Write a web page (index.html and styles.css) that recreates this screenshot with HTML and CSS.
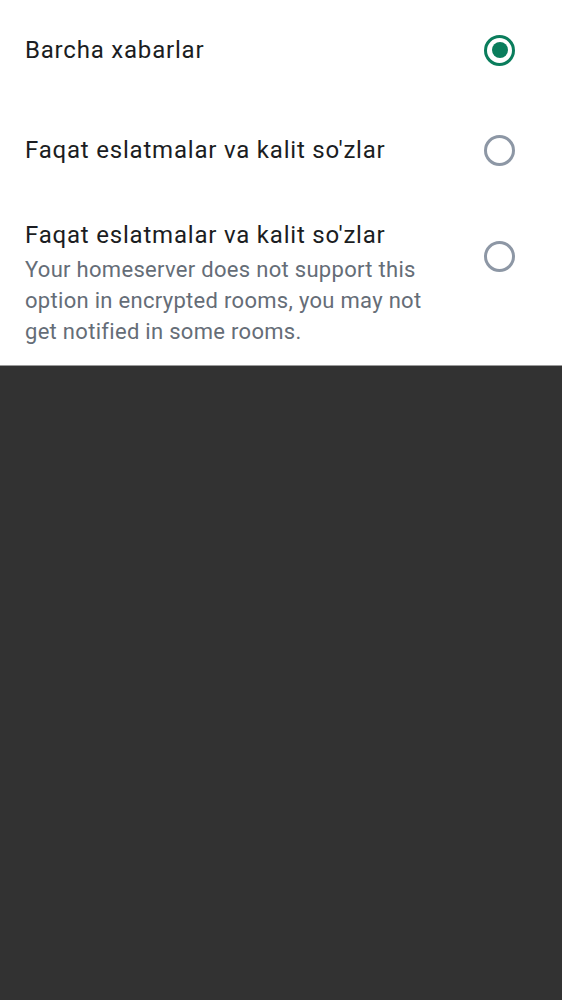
FILE: index.html
```html
<!DOCTYPE html>
<html>
<head>
<meta charset="utf-8">
<link rel="stylesheet" href="styles.css">
</head>
<body>
<div class="sheet">
  <div class="row single">
    <div class="text"><div class="title">Barcha xabarlar</div></div>
    <span class="radio checked"></span>
  </div>
  <div class="row single">
    <div class="text"><div class="title">Faqat eslatmalar va kalit so'zlar</div></div>
    <span class="radio"></span>
  </div>
  <div class="row multi">
    <div class="text">
      <div class="title">Faqat eslatmalar va kalit so'zlar</div>
      <div class="sub">Your homeserver does not support this option in encrypted rooms, you may not get notified in some rooms.</div>
    </div>
    <span class="radio"></span>
  </div>
</div>
</body>
</html>
```
FILE: styles.css
```css
html, body { margin: 0; padding: 0; }
body {
  background: #323232;
  font-family: Roboto, "Noto Sans", sans-serif;
  width: 562px;
  height: 1000px;
}
.sheet {
  background: #ffffff;
  height: 365px;
  display: flex;
  flex-direction: column;
  border-bottom: 1px solid #9a9a9a;
  box-sizing: content-box;
}
.row {
  display: flex;
  align-items: center;
  padding: 0 47px 0 25px;
}
.row.single { height: 100px; }
.row.multi { padding-top: 20px; padding-bottom: 18px; align-items: flex-start; }
.text { flex: 1; }
.title {
  font-size: 24px;
  color: #1b1d22;
  line-height: 30px;
  letter-spacing: 0.8px;
}
.sub {
  margin-top: 4px;
  font-size: 22px;
  line-height: 31px;
  color: #656d77;
  width: 420px;
  letter-spacing: 0.3px;
}
.radio {
  width: 31px;
  height: 31px;
  box-sizing: border-box;
  border: 3px solid #8d97a5;
  border-radius: 50%;
  flex: none;
  position: relative;
}
.multi .radio { margin-top: 21px; }
.radio.checked { border-color: #0a7d5c; }
.radio.checked::after {
  content: "";
  position: absolute;
  left: 4.5px; top: 4.5px;
  width: 16px; height: 16px;
  border-radius: 50%;
  background: #0a7d5c;
}
```
